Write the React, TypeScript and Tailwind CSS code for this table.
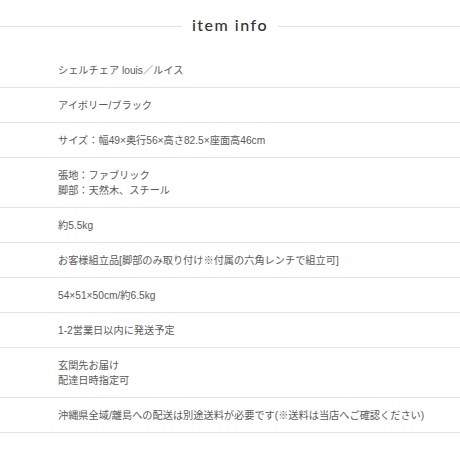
import React from 'react';

const rows: string[][] = [
  ['シェルチェア louis／ルイス'],
  ['アイボリー/ブラック'],
  ['サイズ：幅49×奥行56×高さ82.5×座面高46cm'],
  ['張地：ファブリック', '脚部：天然木、スチール'],
  ['約5.5kg'],
  ['お客様組立品[脚部のみ取り付け※付属の六角レンチで組立可]'],
  ['54×51×50cm/約6.5kg'],
  ['1-2営業日以内に発送予定'],
  ['玄関先お届け', '配達日時指定可'],
  ['沖縄県全域/離島への配送は別途送料が必要です(※送料は当店へご確認ください)'],
];

const App: React.FC = () => {
  return (
    <div className="w-[460px] h-[460px] bg-white overflow-hidden">
      <div className="flex items-start gap-[10px] pt-[16px] h-[53px]">
        <div className="flex-1 h-px bg-[#e2e2e2] mt-[10px]"></div>
        <h2
          className="text-[16px] leading-[18px] tracking-[1.5px] text-[#333] font-medium"
          style={{ fontFamily: '"Lato", "Noto Sans", sans-serif' }}
        >
          item info
        </h2>
        <div className="flex-1 h-px bg-[#e2e2e2] mt-[10px]"></div>
      </div>
      <div style={{ fontFamily: '"Liberation Sans", "Noto Sans CJK JP", sans-serif' }}>
        {rows.map((lines, i) => (
          <div
            key={i}
            className="pl-[58px] pt-[10px] pb-[9px] border-b border-[#e4e4e4] text-[10.2px] leading-[15px] text-[#5a5a5a]"
          >
            {lines.map((l, j) => (
              <div key={j}>{l}</div>
            ))}
          </div>
        ))}
      </div>
    </div>
  );
};

export default App;
